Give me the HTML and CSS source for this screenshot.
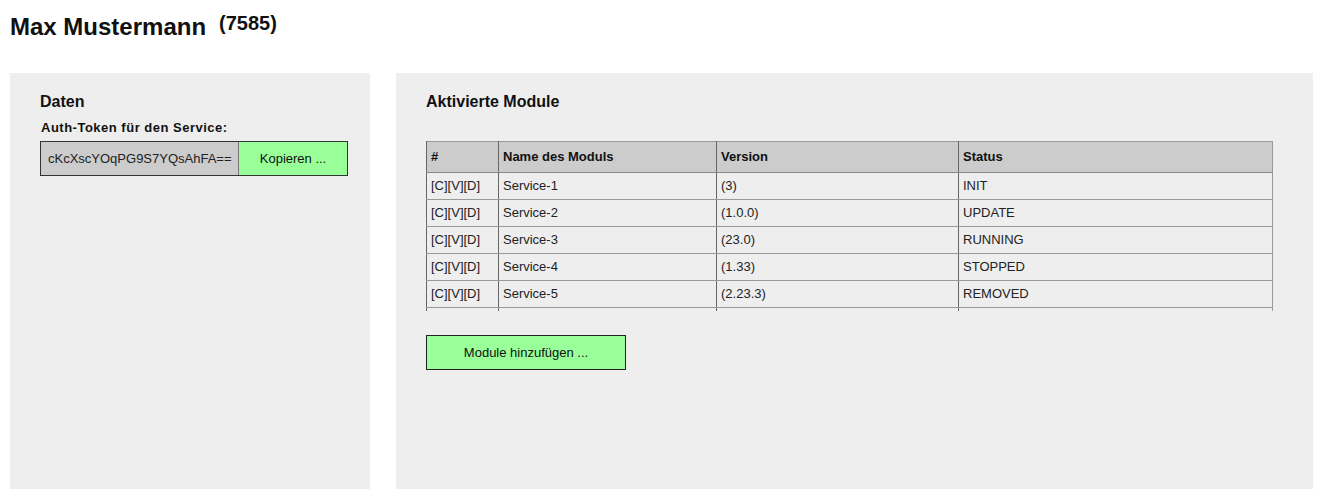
FILE: index.html
```html
<!DOCTYPE html>
<html lang="de">
<head>
<meta charset="utf-8">
<title>Max Mustermann</title>
<link rel="stylesheet" href="styles.css">
</head>
<body>
<header class="page-header">
  <h1 class="user-name">Max Mustermann</h1>
  <span class="user-id">(7585)</span>
</header>
<main class="panels">
  <section class="panel panel-data">
    <h2 class="panel-title">Daten</h2>
    <div class="field-label">Auth-Token für den Service:</div>
    <div class="token-row">
      <div class="token-value">cKcXscYOqPG9S7YQsAhFA==</div>
      <button class="btn btn-copy" type="button">Kopieren ...</button>
    </div>
  </section>
  <section class="panel panel-modules">
    <h2 class="panel-title">Aktivierte Module</h2>
    <div class="table-scroll">
      <table class="module-table">
        <colgroup>
          <col class="col-id">
          <col class="col-name">
          <col class="col-version">
          <col class="col-status">
        </colgroup>
        <thead>
          <tr><th>#</th><th>Name des Moduls</th><th>Version</th><th>Status</th></tr>
        </thead>
        <tbody>
          <tr><td>[C][V][D]</td><td>Service-1</td><td>(3)</td><td>INIT</td></tr>
          <tr><td>[C][V][D]</td><td>Service-2</td><td>(1.0.0)</td><td>UPDATE</td></tr>
          <tr><td>[C][V][D]</td><td>Service-3</td><td>(23.0)</td><td>RUNNING</td></tr>
          <tr><td>[C][V][D]</td><td>Service-4</td><td>(1.33)</td><td>STOPPED</td></tr>
          <tr><td>[C][V][D]</td><td>Service-5</td><td>(2.23.3)</td><td>REMOVED</td></tr>
          <tr class="row-more"><td></td><td></td><td></td><td></td></tr>
        </tbody>
      </table>
    </div>
    <button class="btn btn-add" type="button">Module hinzufügen ...</button>
  </section>
</main>
</body>
</html>
```
FILE: styles.css
```css
* { box-sizing: border-box; }

html, body {
  margin: 0;
  padding: 0;
  background: #fff;
  color: #111;
  font-family: "Liberation Sans", Arial, sans-serif;
}

.page-header {
  display: flex;
  align-items: flex-start;
  padding: 11px 10px 0 10px;
  height: 73px;
}

.user-name {
  margin: 2px 0 0 0;
  font-size: 24px;
  line-height: 28px;
  font-weight: bold;
}

.user-id {
  margin-left: 13px;
  font-size: 20px;
  line-height: 24px;
  font-weight: bold;
}

.panels {
  display: flex;
  gap: 26px;
  padding: 0 10px;
}

.panel {
  background: #eeeeee;
  height: 416px;
  padding: 19px 30px 0 30px;
  min-width: 0;
}

.panel-data { width: 360px; flex: none; }
.panel-modules { flex: 1; padding-right: 40px; }

.panel-title {
  margin: 0;
  font-size: 16px;
  line-height: 19px;
  font-weight: bold;
}

.field-label {
  margin-top: 9px;
  margin-left: 1px;
  font-size: 13px;
  line-height: 16px;
  font-weight: bold;
  letter-spacing: 0.5px;
}

.token-row {
  margin-top: 5px;
  display: flex;
  width: 308px;
  height: 35px;
  border: 1px solid #333;
}

.token-value {
  width: 198px;
  background: #cccccc;
  font-size: 13px;
  line-height: 33px;
  padding-left: 7px;
  border-right: 1px solid #777;
  color: #222;
}

.btn {
  font-family: "Liberation Sans", Arial, sans-serif;
  font-size: 13px;
  color: #111;
  background: #99ff99;
  cursor: pointer;
  padding: 0;
}

.btn-copy {
  flex: 1;
  border: none;
  height: 33px;
}

.panel-modules .panel-title { margin-bottom: 30px; }

.table-scroll {
  height: 170px;
  overflow: hidden;
}

.module-table {
  width: 846px;
  border-collapse: collapse;
  table-layout: fixed;
  font-size: 13px;
  border: 1px solid #999;
  color: #222;
}

.col-id { width: 72px; }
.col-name { width: 218px; }
.col-version { width: 242px; }
.col-status { width: 314px; }

.module-table th,
.module-table td {
  text-align: left;
  padding: 5px 4px;
  line-height: 16px;
  height: 27px;
  border-bottom: 1px solid #999;
  border-left: 1px solid #666;
  white-space: nowrap;
}

.module-table th {
  background: #cccccc;
  font-weight: bold;
  color: #111;
  height: 31px;
  padding-top: 7px;
  padding-bottom: 7px;
  border-bottom-color: #888;
}

.btn-add {
  display: block;
  margin-top: 24px;
  width: 200px;
  height: 35px;
  border: 1px solid #222;
}
```
